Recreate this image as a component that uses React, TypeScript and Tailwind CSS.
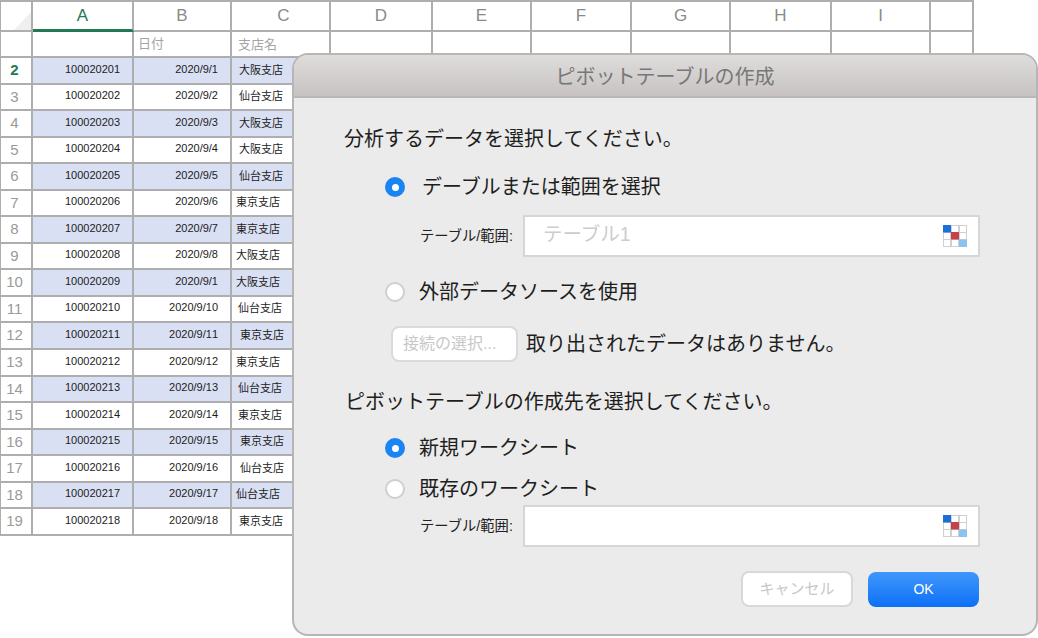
const rows = [
  ["2", "100020201", "2020/9/1", "大阪支店", 7],
  ["3", "100020202", "2020/9/2", "仙台支店", 7],
  ["4", "100020203", "2020/9/3", "大阪支店", 7],
  ["5", "100020204", "2020/9/4", "大阪支店", 7],
  ["6", "100020205", "2020/9/5", "仙台支店", 7],
  ["7", "100020206", "2020/9/6", "東京支店", 4],
  ["8", "100020207", "2020/9/7", "東京支店", 4],
  ["9", "100020208", "2020/9/8", "大阪支店", 4],
  ["10", "100020209", "2020/9/1", "大阪支店", 4],
  ["11", "100020210", "2020/9/10", "仙台支店", 6],
  ["12", "100020211", "2020/9/11", "東京支店", 8],
  ["13", "100020212", "2020/9/12", "東京支店", 4],
  ["14", "100020213", "2020/9/13", "仙台支店", 6],
  ["15", "100020214", "2020/9/14", "東京支店", 6],
  ["16", "100020215", "2020/9/15", "東京支店", 8],
  ["17", "100020216", "2020/9/16", "仙台支店", 8],
  ["18", "100020217", "2020/9/17", "仙台支店", 4],
  ["19", "100020218", "2020/9/18", "東京支店", 7],
] as const;

const cell = "border-r-2 border-b-2 border-[#aeaeae]";
const emptyColumns = ["D", "E", "F", "G", "H", "I", ""];

function Radio({ checked }: { checked?: boolean }) {
  if (checked) {
    return (
      <span className="flex h-5 w-5 shrink-0 items-center justify-center rounded-full bg-[#1a84f5]">
        <span className="h-[7px] w-[7px] rounded-full bg-white" />
      </span>
    );
  }
  return <span className="h-5 w-5 shrink-0 rounded-full border-2 border-[#cfcfcf] bg-white" />;
}

function RangeIcon() {
  return (
    <svg width="24" height="22" viewBox="0 0 24 22" className="shrink-0">
      <rect width="24" height="22" fill="#d0d0d0" />
      {[1, 9, 17].map((x) =>
        [1, 8, 15].map((y) => <rect key={`${x}-${y}`} x={x} y={y} width="6" height="6" fill="#fff" />),
      )}
      <rect x="0" y="0" width="8" height="7.5" fill="#1c6fd8" />
      <rect x="8" y="7" width="8" height="7.5" fill="#c8404a" />
      <rect x="16" y="14.5" width="8" height="7.5" fill="#8cc3ee" />
    </svg>
  );
}

function RangeRow({ placeholder }: { placeholder?: string }) {
  return (
    <div className="flex items-center">
      <span className="ml-[126px] w-[103px] text-[14.3px] text-[#222]">テーブル/範囲:</span>
      <div className="flex h-[42px] w-[457px] items-center justify-between border-2 border-[#d6d6d6] bg-white pl-[18px] pr-[11px]">
        <span className="pb-[4px] text-[19.5px] text-[#cdcdcd]">{placeholder}</span>
        <RangeIcon />
      </div>
    </div>
  );
}

export default function App() {
  return (
    <div className="relative h-[638px] w-[1038px] overflow-hidden bg-white font-['Liberation_Sans','Noto_Sans_CJK_JP',sans-serif]">
      <div className="grid w-[974px] auto-rows-[26.55px] grid-cols-[32px_101px_98px_99px_102px_99px_100px_99px_101px_99px_43px] grid-rows-[30px_26px] border-t-2 border-l border-[#aeaeae]">
        {/* column header */}
        <div className={cell}>
          <svg width="30" height="28" viewBox="0 0 30 28">
            <polygon points="13,28 30,10 30,28" fill="#efefef" />
          </svg>
        </div>
        <div className="flex items-center justify-center border-r-2 border-b-[3px] border-r-[#aeaeae] border-b-[#217a55] text-[17px] text-[#217a55]">
          A
        </div>
        <div className={`${cell} flex items-center justify-center text-[17px] text-[#8a8a8a]`}>B</div>
        <div className={`${cell} flex items-center justify-center pl-[6px] text-[17px] text-[#8a8a8a]`}>C</div>
        {emptyColumns.map((c, i) => (
          <div key={i} className={`${cell} flex items-center justify-center text-[17px] text-[#8a8a8a]`}>
            {c}
          </div>
        ))}

        {/* row 1 */}
        <div className={cell} />
        <div className={cell} />
        <div className={`${cell} pl-[4px] pt-[2px] text-[13px] text-[#a5a5a5]`}>日付</div>
        <div className={`${cell} pl-[6px] pt-[3px] text-[13px] text-[#a5a5a5]`}>支店名</div>
        {emptyColumns.map((_, i) => (
          <div key={i} className={cell} />
        ))}

        {rows.map(([num, id, date, branch, left], r) => {
          const fill = r % 2 === 0 ? "bg-[#dae0f3]" : "bg-white";
          return (
            <div key={num} className="contents">
              <div
                className={`${cell} flex items-center justify-center pr-[3px] text-[15px] ${
                  num === "2" ? "font-bold text-[#217a55]" : "text-[#9a9a9a]"
                }`}
              >
                {num}
              </div>
              <div className={`${cell} ${fill} flex items-center justify-end pr-[12px] pb-[3px] text-[11px] text-[#1c1c1c] [font-kerning:none]`}>
                {id}
              </div>
              <div className={`${cell} ${fill} flex items-center justify-end pr-[12px] pb-[3px] text-[11px] text-[#1c1c1c] [font-kerning:none]`}>
                {date}
              </div>
              <div
                className={`${cell} ${fill} flex items-center pb-[1px] text-[11px] text-[#1c1c1c]`}
                style={{ paddingLeft: left }}
              >
                {branch}
              </div>
              {emptyColumns.map((_, i) => (
                <div key={i} className={cell} />
              ))}
            </div>
          );
        })}
      </div>

      {/* dialog */}
      <div className="absolute left-[292px] top-[53px] h-[583px] w-[746px] overflow-hidden rounded-[16px] border-2 border-[#b7b5b5] bg-[#ebebeb]">
        <div className="flex h-[43px] items-center justify-center border-b-2 border-[#bab7b7] bg-gradient-to-b from-[#dfdcdc] to-[#c7c3c3] pt-[3px] text-[20px] text-[#777]">
          ピボットテーブルの作成
        </div>
        <div className="text-[20px] leading-[28px] text-[#1e1e1e]">
          <div className="ml-[50px] mt-[27px]">分析するデータを選択してください。</div>

          <div className="ml-[91px] mt-[20px] flex items-center gap-[17px]">
            <Radio checked />
            <span>デーブルまたは範囲を選択</span>
          </div>
          <div className="mt-[14px]">
            <RangeRow placeholder="テーブル1" />
          </div>

          <div className="ml-[91px] mt-[21px] flex items-center gap-[14px]">
            <Radio />
            <span>外部データソースを使用</span>
          </div>
          <div className="ml-[97px] mt-[20px] flex items-center gap-[8px]">
            <button
              type="button"
              className="h-[36px] w-[127px] rounded-[8px] border-2 border-[#dadada] bg-white pl-[10px] text-left text-[16px] text-[#c8c8c8]"
            >
              接続の選択...
            </button>
            <span>取り出されたデータはありません。</span>
          </div>

          <div className="ml-[51px] mt-[26px]">ピボットテーブルの作成先を選択してください。</div>

          <div className="ml-[91px] mt-[18px] flex items-center gap-[14px]">
            <Radio checked />
            <span>新規ワークシート</span>
          </div>
          <div className="ml-[91px] mt-[13px] flex items-center gap-[14px]">
            <Radio />
            <span>既存のワークシート</span>
          </div>
          <div className="mt-[2px]">
            <RangeRow />
          </div>

          <div className="ml-[447px] mt-[24px] flex items-center gap-[15px]">
            <button
              type="button"
              className="h-[36px] w-[112px] rounded-[8px] border-2 border-[#d8d8d8] bg-white text-[15px] text-[#c8c8c8]"
            >
              キャンセル
            </button>
            <button
              type="button"
              className="h-[35px] w-[111px] rounded-[8px] bg-gradient-to-b from-[#3f97fb] to-[#0a6ff6] text-[14px] text-white"
            >
              OK
            </button>
          </div>
        </div>
      </div>
    </div>
  );
}
